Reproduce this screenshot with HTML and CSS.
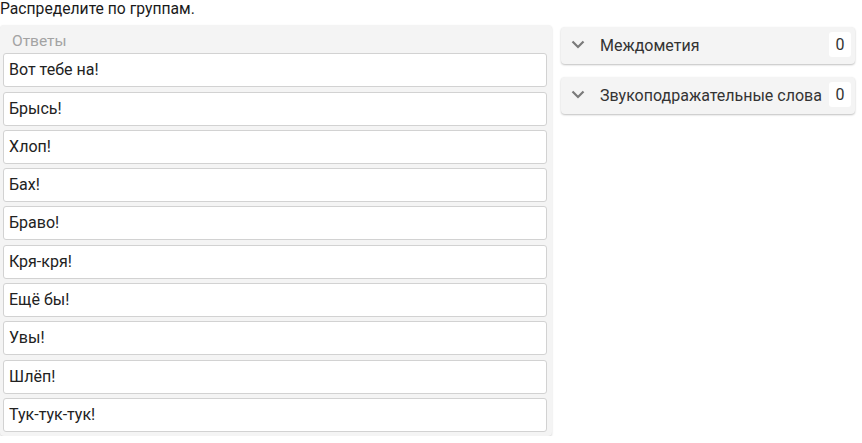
FILE: index.html
```html
<!DOCTYPE html>
<html lang="ru">
<head>
<meta charset="utf-8">
<link rel="stylesheet" href="styles.css">
</head>
<body>
<div class="title">Распределите по группам.</div>
<div class="layout">
  <div class="answers">
    <div class="answers-head">Ответы</div>
    <div class="item">Вот тебе на!</div>
    <div class="item">Брысь!</div>
    <div class="item">Хлоп!</div>
    <div class="item">Бах!</div>
    <div class="item">Браво!</div>
    <div class="item">Кря-кря!</div>
    <div class="item">Ещё бы!</div>
    <div class="item">Увы!</div>
    <div class="item">Шлёп!</div>
    <div class="item">Тук-тук-тук!</div>
  </div>
  <div class="groups">
    <div class="group">
      <svg class="chev" width="14" height="9" viewBox="0 0 14 9"><path d="M1.5 1.5 L7 7 L12.5 1.5" fill="none" stroke="#7a7a7a" stroke-width="2.2"/></svg>
      <span class="gname">Междометия</span>
      <span class="count">0</span>
    </div>
    <div class="group">
      <svg class="chev" width="14" height="9" viewBox="0 0 14 9"><path d="M1.5 1.5 L7 7 L12.5 1.5" fill="none" stroke="#7a7a7a" stroke-width="2.2"/></svg>
      <span class="gname">Звукоподражательные слова</span>
      <span class="count">0</span>
    </div>
  </div>
</div>
</body>
</html>
```
FILE: styles.css
```css
html, body {
  margin: 0;
  padding: 0;
  background: #fff;
}
body {
  font-family: Roboto, "Noto Sans", sans-serif;
  color: #212121;
}
.title {
  font-size: 15.7px;
  line-height: 20px;
  height: 20px;
  margin-top: -1px;
  color: #1a1a1a;
}
.layout {
  display: flex;
  align-items: flex-start;
  margin-top: 6px;
}
.answers {
  width: 552px;
  background: #f4f4f4;
  border-radius: 4px;
  box-shadow: 0 1px 2px rgba(0,0,0,0.18);
  padding: 0 5px 4px 3px;
  box-sizing: border-box;
  display: flex;
  flex-direction: column;
  gap: 4.3px;
}
.answers-head {
  font-size: 15.5px;
  color: #a3a3a3;
  height: 24px;
  line-height: 24px;
  padding-left: 9px;
  padding-top: 4px;
  margin-bottom: -4px;
}
.item {
  background: #fff;
  border: 1px solid #d2d2d2;
  border-radius: 3px;
  height: 32px;
  line-height: 32px;
  padding-left: 5px;
  font-size: 16px;
  color: #222;
}
.groups {
  margin-left: 9px;
  width: 294px;
  display: flex;
  flex-direction: column;
  gap: 13px;
  margin-top: 2px;
}
.group {
  height: 37px;
  background: #f4f4f4;
  border-radius: 4px;
  box-shadow: 0 1px 2px rgba(0,0,0,0.25);
  display: flex;
  align-items: center;
  padding-left: 10px;
  padding-right: 4px;
  box-sizing: border-box;
}
.chev {
  flex: none;
  margin-right: 15px;
  margin-top: -3px;
}
.gname {
  flex: 1;
  font-size: 16px;
  color: #333;
}
.count {
  background: #fff;
  font-size: 16px;
  color: #333;
  min-width: 22px;
  height: 25px;
  line-height: 25px;
  text-align: center;
  border-radius: 3px;
  margin-top: -3px;
}
```
